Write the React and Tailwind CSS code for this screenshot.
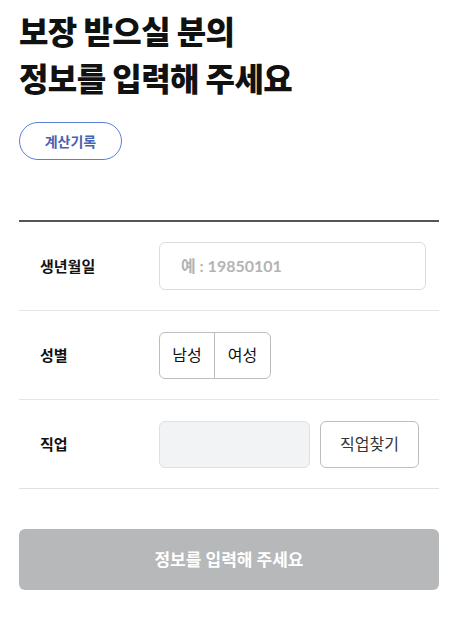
export default function App() {
  const font = { fontFamily: "Lato, 'Noto Sans CJK KR', sans-serif" };
  return (
    <div className="w-[462px] h-[628px] bg-white pl-[19px] pr-[23px] pt-[8px] text-[#111]" style={font}>
      <h1 className="text-[32px] leading-[47px] font-extrabold tracking-[-0.6px]">
        보장 받으실 분의
        <br />
        정보를 입력해 주세요
      </h1>
      <button className="mt-[20px] w-[103px] h-[38px] rounded-full border border-[#5b7fd8] text-[#4a62b5] text-[14px] font-bold flex items-center justify-center">
        계산기록
      </button>
      <div className="mt-[60px] border-t-2 border-[#555]">
        <div className="flex items-center h-[89px] border-b border-[#e5e5e5]">
          <div className="w-[140px] pl-[21px] text-[15px] font-bold">생년월일</div>
          <div className="w-[267px] h-[48px] rounded-[6px] border border-[#dcdcdc] flex items-center pl-[21px] text-[16px] font-bold text-[#b3b3b3]">
            예 : 19850101
          </div>
        </div>
        <div className="flex items-center h-[89px] border-b border-[#e5e5e5]">
          <div className="w-[140px] pl-[21px] text-[15px] font-bold">성별</div>
          <div className="flex h-[47px] rounded-[6px] border border-[#bdbdbd] overflow-hidden text-[16px]">
            <div className="w-[55px] flex items-center justify-center border-r border-[#bdbdbd]">남성</div>
            <div className="w-[55px] flex items-center justify-center">여성</div>
          </div>
        </div>
        <div className="flex items-center h-[89px] border-b border-[#e0e0e0]">
          <div className="w-[140px] pl-[21px] text-[15px] font-bold">직업</div>
          <div className="w-[151px] h-[47px] rounded-[6px] border border-[#e0e0e0] bg-[#f2f3f5]" />
          <button className="ml-[10px] w-[99px] h-[47px] rounded-[6px] border border-[#bdbdbd] text-[16px] text-[#333] flex items-center justify-center">
            직업찾기
          </button>
        </div>
      </div>
      <button className="mt-[40px] w-full h-[61px] rounded-[6px] bg-[#b7b8ba] text-white text-[17px] font-bold flex items-center justify-center">
        정보를 입력해 주세요
      </button>
    </div>
  );
}
